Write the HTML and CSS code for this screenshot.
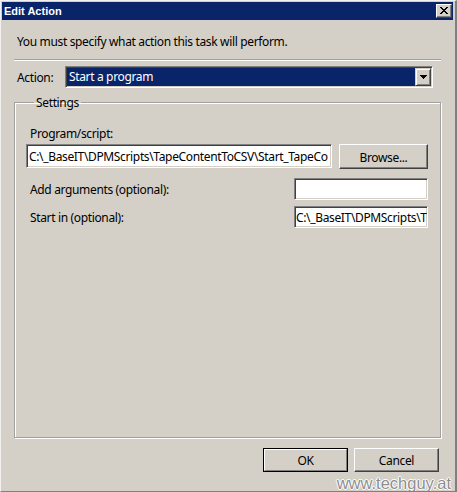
FILE: index.html
```html
<!DOCTYPE html>
<html>
<head>
<meta charset="utf-8">
<link rel="stylesheet" href="styles.css">
</head>
<body>
<div class="window">
  <div class="titlebar">
    <span class="title">Edit Action</span>
    <div class="close">
      <svg width="8" height="7" viewBox="0 0 8 7" shape-rendering="crispEdges"><path d="M0 0h2v1H0zM6 0h2v1H6zM1 1h2v1H1zM5 1h2v1H5zM2 2h4v1H2zM3 3h2v1H3zM2 4h4v1H2zM1 5h2v1H1zM5 5h2v1H5zM0 6h2v1H0zM6 6h2v1H6z" fill="#000"/></svg>
    </div>
  </div>
  <div class="content">
    <p class="intro">You must specify what action this task will perform.</p>
    <div class="sep"></div>
    <div class="action-row">
      <span class="action-label">Action:</span>
      <div class="combo">
        <div class="combo-value">Start a program</div>
        <div class="combo-btn">
          <svg width="7" height="4" viewBox="0 0 7 4" shape-rendering="crispEdges"><path d="M0 0h7v1H0zM1 1h5v1H1zM2 2h3v1H2zM3 3h1v1H3z" fill="#000"/></svg>
        </div>
      </div>
    </div>
    <fieldset class="settings">
      <legend class="legend">Settings</legend>
      <div class="field-label">Program/script:</div>
      <div class="prog-row">
        <div class="input wide"><span class="input-text">C:\_BaseIT\DPMScripts\TapeContentToCSV\Start_TapeCo</span></div>
        <div class="btn browse">Browse...</div>
      </div>
      <div class="row first">
        <div class="field-label inline">Add arguments (optional):</div>
        <div class="input small"></div>
      </div>
      <div class="row">
        <div class="field-label inline">Start in (optional):</div>
        <div class="input small"><span class="input-text tight">C:\_BaseIT\DPMScripts\T</span></div>
      </div>
    </fieldset>
    <div class="footer">
      <div class="btn ok"><div class="btn-inner">OK</div></div>
      <div class="btn cancel">Cancel</div>
    </div>
  </div>
  <div class="watermark">www.techguy.at</div>
</div>
</body>
</html>
```
FILE: styles.css
```css
* { box-sizing: border-box; }
html, body { margin: 0; padding: 0; background: #d4d0c8; }
body {
  font-family: "Noto Sans", "Open Sans", sans-serif;
  font-size: 12px;
  letter-spacing: -0.35px;
  line-height: 15px;
  color: #000;
}
.window {
  position: relative;
  width: 457px;
  height: 492px;
  background: #d4d0c8;
  border-top: 1px solid #f2f1ee;
  border-left: 1px solid #f2f1ee;
  border-right: 2px solid #808080;
  border-bottom: 1px solid #808080;
  padding: 1px 2px 0 1px;
  overflow: hidden;
}
.titlebar {
  height: 18px;
  background: #0a246a;
  display: flex;
  align-items: center;
  justify-content: space-between;
  padding-left: 2px;
}
.title {
  font-family: "Liberation Sans", Arial, sans-serif;
  font-weight: bold;
  font-size: 11px;
  letter-spacing: 0;
  color: #fff;
  line-height: 13px;
}
.close {
  width: 16px;
  height: 14px;
  margin-right: 1px;
  background: #d4d0c8;
  border-top: 1px solid #fff;
  border-left: 1px solid #fff;
  border-right: 1px solid #404040;
  border-bottom: 1px solid #404040;
  box-shadow: inset -1px -1px 0 #808080;
  display: flex;
  align-items: center;
  justify-content: center;
}
.close svg { display: block; margin: 0 1px 1px 0; }
.content {
  padding: 0 12px;
}
.intro {
  margin: 14px 0 0;
  padding-left: 3px;
}
.sep {
  margin-top: 10px;
  height: 2px;
  border-top: 1px solid #a0a0a0;
  border-bottom: 1px solid #fff;
}
.action-row {
  display: flex;
  align-items: center;
  margin-top: 5px;
  padding-left: 3px;
}
.action-label {
  width: 48px;
  padding-top: 1px;
}
.combo {
  width: 368px;
  height: 22px;
  display: flex;
  border-top: 1px solid #808080;
  border-left: 1px solid #808080;
  border-right: 1px solid #fff;
  border-bottom: 1px solid #fff;
  box-shadow: inset 1px 1px 0 #404040, inset -1px -1px 0 #d4d0c8;
  padding: 1px;
  background: #fff;
}
.combo-value {
  flex: 1;
  background: #0a246a;
  color: #fff;
  padding-left: 2px;
  line-height: 18px;
}
.combo-btn {
  width: 16px;
  height: 18px;
  background: #d4d0c8;
  border-top: 1px solid #d4d0c8;
  border-left: 1px solid #d4d0c8;
  border-right: 1px solid #404040;
  border-bottom: 1px solid #404040;
  box-shadow: inset 1px 1px 0 #fff, inset -1px -1px 0 #808080;
  display: flex;
  align-items: center;
  justify-content: center;
}
.combo-btn svg { display: block; }
.settings {
  margin: 7px 0 0;
  padding: 16px 12px 0 11px;
  height: 343px;
  border: 1px solid #a0a0a0;
  box-shadow: inset 1px 1px 0 #fff, 1px 1px 0 #fff;
  min-width: 0;
}
.legend {
  margin-left: 8px;
  padding: 0 2px;
  line-height: 15px;
}
.field-label {
  padding-left: 4px;
}
.prog-row {
  display: flex;
  align-items: flex-start;
  margin-top: 3px;
}
.input {
  background: #fff;
  border-top: 1px solid #808080;
  border-left: 1px solid #808080;
  border-right: 1px solid #fff;
  border-bottom: 1px solid #fff;
  box-shadow: inset 1px 1px 0 #404040, inset -1px -1px 0 #d4d0c8;
  overflow: hidden;
  white-space: nowrap;
  display: flex;
  align-items: center;
}
.input-text { padding-left: 2px; overflow: hidden; }
.input-text.tight { padding-left: 1px; }
.input.wide {
  width: 306px;
  height: 24px;
}
.input.small {
  width: 134px;
  height: 22px;
}
.btn {
  background: #d4d0c8;
  border-top: 1px solid #fff;
  border-left: 1px solid #fff;
  border-right: 1px solid #404040;
  border-bottom: 1px solid #404040;
  box-shadow: inset -1px -1px 0 #808080;
  display: flex;
  align-items: center;
  justify-content: center;
}
.browse {
  width: 89px;
  height: 25px;
  margin-left: 7px;
  padding-top: 1px;
}
.row {
  display: flex;
  align-items: center;
  justify-content: space-between;
  margin-top: 6px;
}
.row.first { margin-top: 9px; }
.footer {
  display: flex;
  justify-content: flex-end;
  gap: 6px;
  margin-top: 10px;
  padding-right: 2px;
}
.ok, .cancel {
  width: 85px;
  height: 24px;
}
.ok {
  border: 1px solid #000;
  box-shadow: none;
  padding: 0;
}
.btn-inner {
  width: 100%;
  height: 100%;
  border-top: 1px solid #fff;
  border-left: 1px solid #fff;
  border-right: 1px solid #808080;
  border-bottom: 1px solid #808080;
  display: flex;
  align-items: center;
  justify-content: center;
}
.watermark {
  position: absolute;
  right: 4px;
  bottom: -1px;
  font-family: "Liberation Sans", Arial, sans-serif;
  font-size: 16.5px;
  letter-spacing: 0;
  line-height: 18px;
  color: #8e8e8e;
  text-shadow: 1px 0 0 #fff, -1px 0 0 #fff, 0 1px 0 #fff, 0 -1px 0 #fff;
}
```
